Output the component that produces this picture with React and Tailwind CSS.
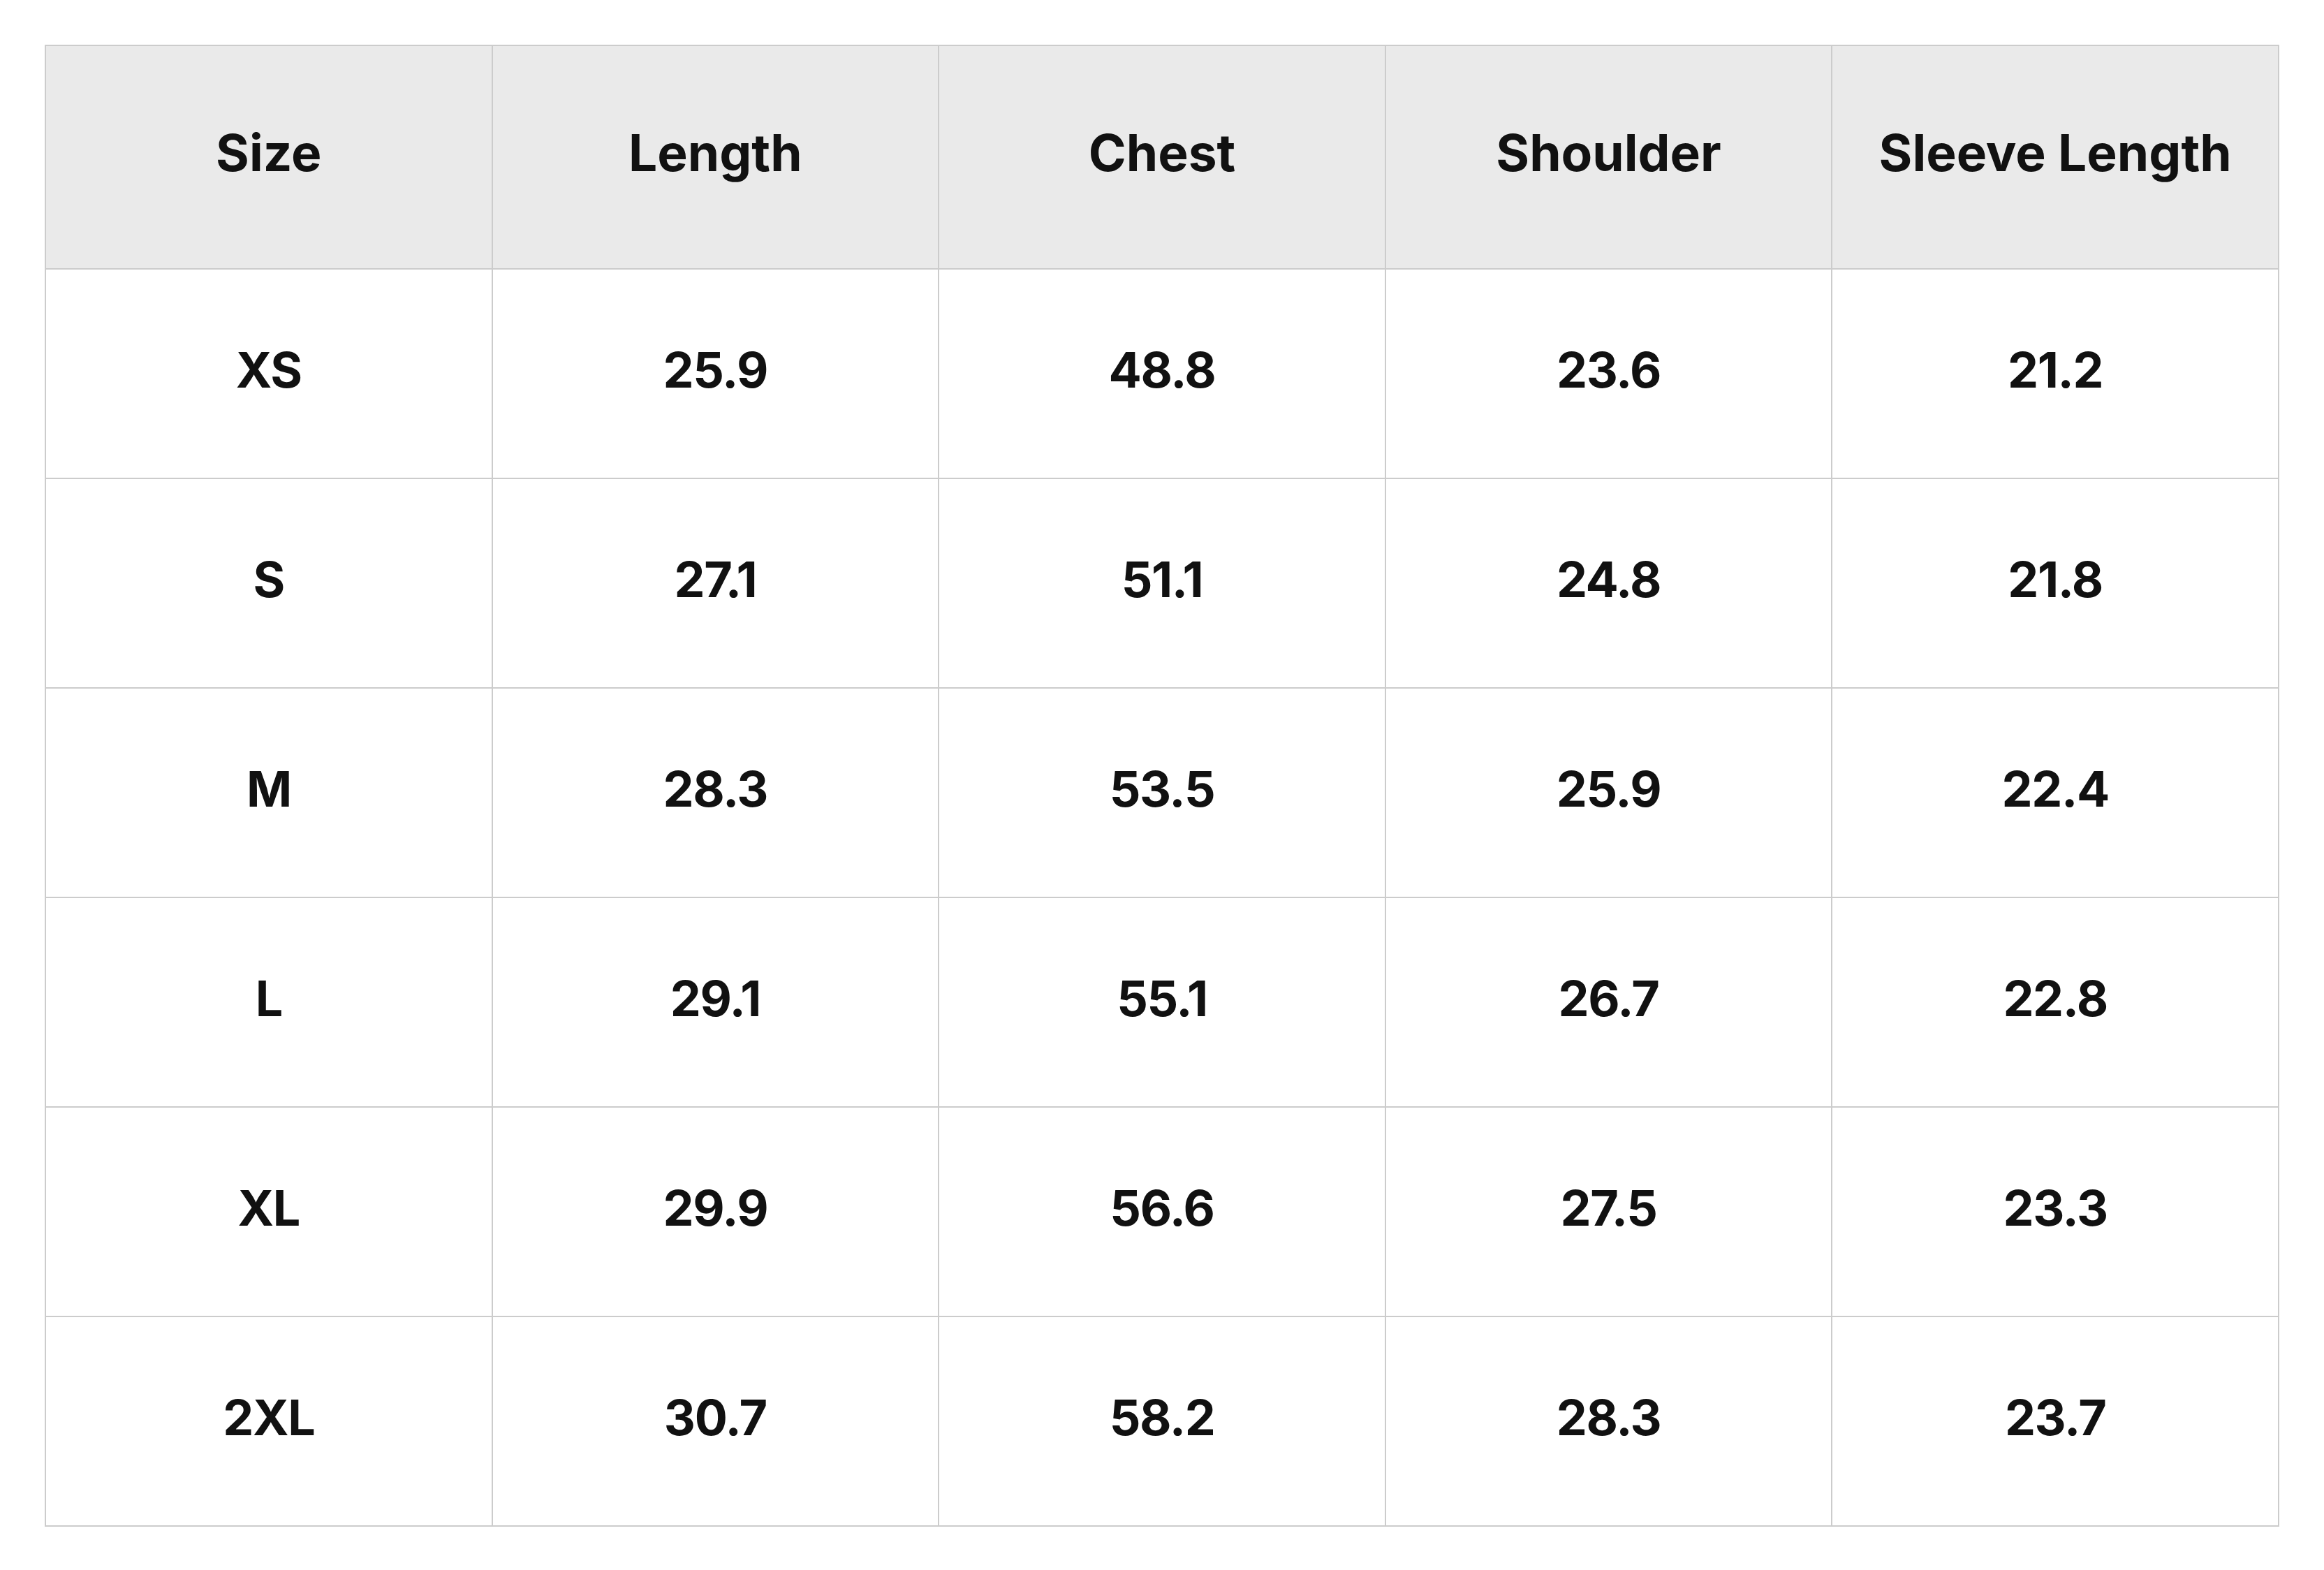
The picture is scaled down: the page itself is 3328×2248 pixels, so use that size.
import React from 'react';

const headers = ['Size', 'Length', 'Chest', 'Shoulder', 'Sleeve Length'];

const rows = [
  ['XS', '25.9', '48.8', '23.6', '21.2'],
  ['S', '27.1', '51.1', '24.8', '21.8'],
  ['M', '28.3', '53.5', '25.9', '22.4'],
  ['L', '29.1', '55.1', '26.7', '22.8'],
  ['XL', '29.9', '56.6', '27.5', '23.3'],
  ['2XL', '30.7', '58.2', '28.3', '23.7'],
];

export default function App() {
  return (
    <div className="min-h-screen bg-white p-[64px] font-['Inter',sans-serif] text-[#111111]">
      <table className="w-[3200px] table-fixed border-collapse">
        <thead>
          <tr className="h-[320px] bg-[#eaeaea]">
            {headers.map((h) => (
              <th key={h} className="border-2 border-[#cccccc] pb-[12px] text-center text-[73px] font-bold">
                {h}
              </th>
            ))}
          </tr>
        </thead>
        <tbody>
          {rows.map((row) => (
            <tr key={row[0]} className="h-[300px]">
              {row.map((cell, i) => (
                <td key={i} className="border-2 border-[#cccccc] pb-[12px] text-center text-[70px] font-bold tracking-[-0.02em]">
                  {cell}
                </td>
              ))}
            </tr>
          ))}
        </tbody>
      </table>
    </div>
  );
}
